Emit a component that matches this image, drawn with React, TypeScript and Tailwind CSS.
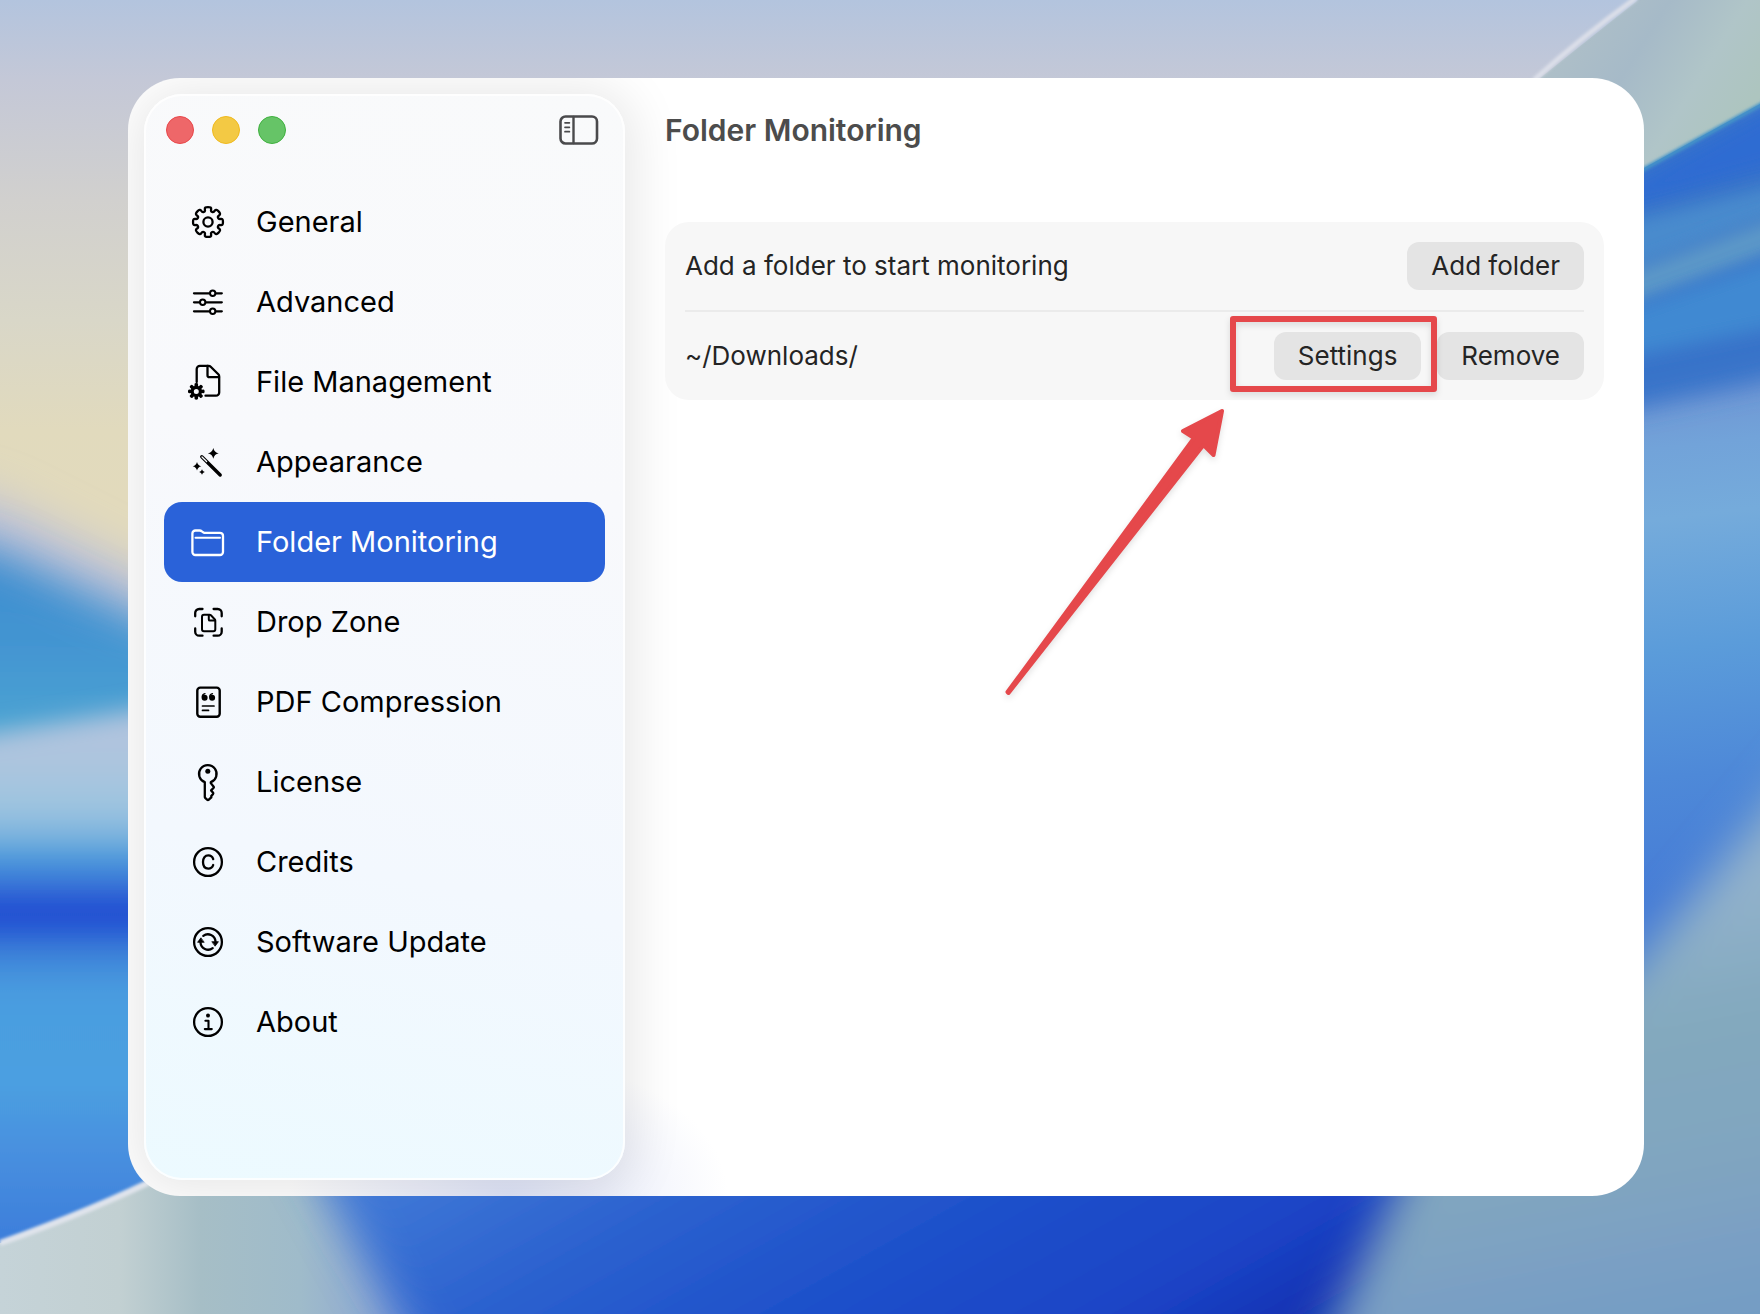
import React, { useState } from 'react';

type IconProps = { children: React.ReactNode };

// Shared 36x36 frame for every sidebar glyph
const Icon = ({ children }: IconProps) => (
  <svg
    viewBox="0 0 36 36"
    className="size-9 shrink-0 overflow-visible"
    fill="none"
    stroke="currentColor"
    strokeWidth={2.3}
    strokeLinecap="round"
    strokeLinejoin="round"
    aria-hidden="true"
  >
    {children}
  </svg>
);

// Rounded gear outline: corners are smoothed by curving through the midpoints
const gearPath = (cx: number, cy: number, outer: number, inner: number, tip: number, root: number) => {
  const pts: number[][] = [];
  for (let i = 0; i < 8; i++) {
    const a = (i * Math.PI) / 4;
    [[-root, inner], [-tip, outer], [tip, outer], [root, inner]].forEach(([d, r]) => {
      pts.push([cx + r * Math.cos(a + d), cy + r * Math.sin(a + d)]);
    });
  }
  const mid = (p: number[], q: number[]) => `${((p[0] + q[0]) / 2).toFixed(2)} ${((p[1] + q[1]) / 2).toFixed(2)}`;
  let d = `M${mid(pts[pts.length - 1], pts[0])}`;
  pts.forEach((p, i) => {
    d += `Q${p[0].toFixed(2)} ${p[1].toFixed(2)} ${mid(p, pts[(i + 1) % pts.length])}`;
  });
  return d + 'Z';
};

const star = (x: number, y: number, r: number) => {
  const k = r * 0.18;
  return `M${x} ${y - r}Q${x + k} ${y - k} ${x + r} ${y}Q${x + k} ${y + k} ${x} ${y + r}Q${x - k} ${y + k} ${x - r} ${y}Q${x - k} ${y - k} ${x} ${y - r}Z`;
};

const GeneralIcon = () => (
  <Icon>
    <path d={gearPath(18, 18, 15.4, 11, 0.24, 0.24)} />
    <circle cx="18" cy="18" r="4.6" />
  </Icon>
);

const AdvancedIcon = () => (
  <Icon>
    <path d="M4 9.3h15.6M25.8 9.3h6M4 18.3h5.6M15.8 18.3h16M4 27.3h15.6M25.8 27.3h6" />
    <circle cx="22.7" cy="9.3" r="2.7" strokeWidth={2} />
    <circle cx="12.7" cy="18.3" r="2.7" strokeWidth={2} />
    <circle cx="22.7" cy="27.3" r="2.7" strokeWidth={2} />
  </Icon>
);

const FileIcon = () => (
  <Icon>
    <path d="M6.7 18V5a3.2 3.2 0 0 1 3.2-3.2h8.7c.8 0 1.5.3 2.1.9l7.6 7.6c.6.6.9 1.3.9 2.1V28.5a3.2 3.2 0 0 1-3.2 3.2H15.5" />
    <path d="M17.5 2v9.2a2 2 0 0 0 2 2h9.5" />
    <path
      d={gearPath(6.3, 27.4, 8.6, 5.6, 0.24, 0.28) + 'M6.3 24.9a2.5 2.5 0 1 0 0 5a2.5 2.5 0 1 0 0-5Z'}
      fill="currentColor"
      fillRule="evenodd"
      stroke="none"
    />
  </Icon>
);

const AppearanceIcon = () => (
  <Icon>
    <path d="M11.8 12.8 30.2 31" strokeWidth={3.4} />
    <path d="M12 13 16.6 17.5" stroke="#f8fafc" strokeWidth={1.3} />
    <path d={star(23.3, 9.3, 5.4) + star(7, 22.2, 4.3) + star(12, 28, 2.8)} fill="currentColor" stroke="none" />
  </Icon>
);

const FolderIcon = () => (
  <Icon>
    <path d="M2.4 9.5a3 3 0 0 1 3-3h4.2c.9 0 1.6.3 2.3.9l1 .8c.5.4 1 .6 1.7.6h15.4a3 3 0 0 1 3 3V28a3 3 0 0 1-3 3H5.4a3 3 0 0 1-3-3Z" />
    <path d="M5.5 13.7H30" strokeWidth={2} />
  </Icon>
);

const DropZoneIcon = () => (
  <Icon>
    <path d="M5.2 12.3V9a4 4 0 0 1 4-4h3.3M23.6 5H27.7a4 4 0 0 1 4 4v3.3M31.7 24.5v3.2a4 4 0 0 1-4 4h-4.1M12.5 31.7H9.2a4 4 0 0 1-4-4v-3.2" />
    <path d="M14 10.7h5.5c.6 0 1 .2 1.4.6l3.8 3.9c.4.4.6.9.6 1.4v8.7a2 2 0 0 1-2 2H14a2 2 0 0 1-2-2V12.7a2 2 0 0 1 2-2Z" strokeWidth={2} />
    <path d="M18.8 11v4.4a1.2 1.2 0 0 0 1.2 1.2h5" strokeWidth={2} />
  </Icon>
);

const PdfIcon = () => (
  <Icon>
    <rect x="7.3" y="3.6" width="22.4" height="29.2" rx="3" strokeWidth={2.4} />
    <path d="M12.3 12.8c0-1.6 1-2.9 2.7-3.2M19.8 12.8c0-1.6 1-2.9 2.7-3.2" strokeWidth={1.3} />
    <circle cx="14.6" cy="13.7" r="3" fill="currentColor" stroke="none" />
    <circle cx="22.1" cy="13.7" r="3" fill="currentColor" stroke="none" />
    <path d="M12.5 22h11.5M12.5 26.4h6" strokeWidth={1.7} />
  </Icon>
);

const KeyIcon = () => (
  <Icon>
    <path d="M14.8 18.2a8.8 8.8 0 1 1 6 0v.9l2.9 3.7c.3.4.3.7 0 1l-2.6 2.6 2 2.4c.3.4.3.7 0 1.1l-1.8 2.2v1.3L18.8 35.7c-.5.5-1.2.5-1.7 0l-1.7-1.5c-.4-.4-.6-.8-.6-1.3Z" />
    <circle cx="17.8" cy="7.3" r="2.5" fill="currentColor" stroke="none" />
  </Icon>
);

const CreditsIcon = () => (
  <Icon>
    <circle cx="18" cy="18" r="13.9" />
    <path d="M23.2 15.1c-.7-2.3-2.5-3.7-4.9-3.7-3.3 0-5.3 2.5-5.3 6.6s2 6.6 5.3 6.6c2.4 0 4.2-1.3 4.9-3.6" />
  </Icon>
);

const UpdateIcon = () => (
  <Icon>
    <circle cx="18" cy="18" r="13.9" />
    <path d="M13.3 11.9A7.6 7.6 0 0 1 25.5 17.5M22.7 24.1A7.6 7.6 0 0 1 10.5 18.5" />
    <path d="M22.2 17.7h6.2l-3.1 4.2ZM13.8 18.3H7.6l3.1-4.2Z" fill="currentColor" strokeWidth={0.8} />
  </Icon>
);

const AboutIcon = () => (
  <Icon>
    <circle cx="18" cy="18" r="13.9" />
    <circle cx="18" cy="11.5" r="2" fill="currentColor" stroke="none" />
    <path d="M15.4 16.7h3.1v8.4M14.8 25.1h7" strokeWidth={2.1} />
  </Icon>
);

const navItems = [
  { id: 'general', label: 'General', icon: <GeneralIcon /> },
  { id: 'advanced', label: 'Advanced', icon: <AdvancedIcon /> },
  { id: 'files', label: 'File Management', icon: <FileIcon /> },
  { id: 'appearance', label: 'Appearance', icon: <AppearanceIcon /> },
  { id: 'folders', label: 'Folder Monitoring', icon: <FolderIcon /> },
  { id: 'dropzone', label: 'Drop Zone', icon: <DropZoneIcon /> },
  { id: 'pdf', label: 'PDF Compression', icon: <PdfIcon /> },
  { id: 'license', label: 'License', icon: <KeyIcon /> },
  { id: 'credits', label: 'Credits', icon: <CreditsIcon /> },
  { id: 'update', label: 'Software Update', icon: <UpdateIcon /> },
  { id: 'about', label: 'About', icon: <AboutIcon /> },
];

// Desktop wallpaper: soft bands of colour behind the window
const Wallpaper = () => (
  <svg
    viewBox="0 0 1760 1314"
    preserveAspectRatio="none"
    className="absolute inset-0 size-full"
    aria-hidden="true"
  >
    <defs>
      <linearGradient id="sky" x1="0" y1="0" x2="0" y2="500" gradientUnits="userSpaceOnUse">
        <stop offset="0" stopColor="#b3c4de" />
        <stop offset="0.16" stopColor="#c4c8d7" />
        <stop offset="0.4" stopColor="#d1d0ce" />
        <stop offset="0.64" stopColor="#d9d7c8" />
        <stop offset="0.86" stopColor="#e1dabd" />
        <stop offset="1" stopColor="#e2dabc" />
      </linearGradient>
      <linearGradient id="leftBands" x1="0" y1="715" x2="0" y2="1240" gradientUnits="userSpaceOnUse">
        <stop offset="0" stopColor="#b2c3de" />
        <stop offset="0.08" stopColor="#aec5de" />
        <stop offset="0.17" stopColor="#9fc5e0" />
        <stop offset="0.23" stopColor="#7db4de" />
        <stop offset="0.27" stopColor="#4b9bdb" />
        <stop offset="0.32" stopColor="#3a76d8" />
        <stop offset="0.37" stopColor="#1e49d1" />
        <stop offset="0.4" stopColor="#2455d3" />
        <stop offset="0.46" stopColor="#3f86d9" />
        <stop offset="0.53" stopColor="#4a9de0" />
        <stop offset="0.7" stopColor="#4ba0e1" />
        <stop offset="0.8" stopColor="#4a93e0" />
        <stop offset="1" stopColor="#3d7edb" />
      </linearGradient>
      <linearGradient id="leftBlue" x1="0" y1="560" x2="0" y2="735" gradientUnits="userSpaceOnUse">
        <stop offset="0" stopColor="#3f8ed0" />
        <stop offset="0.55" stopColor="#4496d2" />
        <stop offset="1" stopColor="#4ca5d2" />
      </linearGradient>
      <linearGradient id="shore" x1="0" y1="0" x2="400" y2="0" gradientUnits="userSpaceOnUse">
        <stop offset="0" stopColor="#c5d3d8" />
        <stop offset="0.3" stopColor="#c2d0d2" />
        <stop offset="0.5" stopColor="#a6bec6" />
        <stop offset="0.75" stopColor="#9fbbca" />
        <stop offset="1" stopColor="#8ba5d4" />
      </linearGradient>
      <linearGradient id="bottomBlue" x1="300" y1="1000" x2="800" y2="1900" gradientUnits="userSpaceOnUse">
        <stop offset="0.2" stopColor="#3f78d6" />
        <stop offset="0.34" stopColor="#2c62cf" />
        <stop offset="0.5" stopColor="#1e50ca" />
        <stop offset="0.66" stopColor="#1b43c6" />
        <stop offset="0.76" stopColor="#0f2dae" />
      </linearGradient>
      <linearGradient id="rightBands" x1="1640" y1="400" x2="1700" y2="900" gradientUnits="userSpaceOnUse">
        <stop offset="0" stopColor="#6f97d4" />
        <stop offset="0.1" stopColor="#72a3d9" />
        <stop offset="0.24" stopColor="#75abdb" />
        <stop offset="0.5" stopColor="#5b9cda" />
        <stop offset="0.75" stopColor="#4e89d8" />
        <stop offset="1" stopColor="#467cd6" />
      </linearGradient>
      <linearGradient id="rightTeal" x1="1640" y1="900" x2="1720" y2="1314" gradientUnits="userSpaceOnUse">
        <stop offset="0" stopColor="#92b2cc" />
        <stop offset="0.3" stopColor="#83a9be" />
        <stop offset="0.65" stopColor="#80a5c0" />
        <stop offset="0.85" stopColor="#7a9fc4" />
        <stop offset="1" stopColor="#739dc4" />
      </linearGradient>
      <linearGradient id="topTeal" x1="1580" y1="20" x2="1740" y2="120" gradientUnits="userSpaceOnUse">
        <stop offset="0" stopColor="#aebfc8" />
        <stop offset="0.35" stopColor="#a6bac8" />
        <stop offset="0.7" stopColor="#b0c5c8" />
        <stop offset="1" stopColor="#adc5bf" />
      </linearGradient>
      <filter id="blur1" x="-20%" y="-20%" width="140%" height="140%"><feGaussianBlur stdDeviation="1.5" /></filter>
      <filter id="blur5" x="-20%" y="-30%" width="140%" height="160%"><feGaussianBlur stdDeviation="9" /></filter>
      <filter id="blur10" x="-30%" y="-30%" width="160%" height="160%"><feGaussianBlur stdDeviation="12" /></filter>
      <filter id="blur20" x="-30%" y="-30%" width="160%" height="160%"><feGaussianBlur stdDeviation="22" /></filter>
    </defs>

    <rect width="1760" height="1314" fill="url(#sky)" />

    {/* left edge */}
    <path d="M-100 470 0 500 160 580V900H-100Z" fill="#bfc2d8" filter="url(#blur20)" />
    <path d="M-100 518 0 550 180 636V900H-100Z" fill="url(#leftBlue)" filter="url(#blur20)" />
    <path d="M-60 742 200 700V1400H-60Z" fill="url(#leftBands)" filter="url(#blur10)" />

    {/* bottom edge */}
    <path d="M0 1243C60 1222 110 1202 170 1172H480V1314H0Z" fill="url(#shore)" />
    <path d="M0 1243C60 1222 110 1202 170 1172" fill="none" stroke="#e0e4ec" strokeWidth="6" filter="url(#blur1)" />
    <path d="M278 1100 443 1400H1700V1100Z" fill="url(#bottomBlue)" filter="url(#blur20)" />

    {/* right edge */}
    <rect x="1600" y="120" width="160" height="1194" fill="url(#rightBands)" />
    <path d="M1438 1100 1620 985 1840 720V1400H1296Z" fill="url(#rightTeal)" filter="url(#blur20)" />
    <path d="M1560 190 1900 20V345L1760 382 1560 424Z" fill="#3773c9" filter="url(#blur10)" />
    <path d="M1600 200 1800 90V160L1600 215Z" fill="#2f6cd2" filter="url(#blur5)" />
    <path d="M1600 228 1800 180V205L1600 280Z" fill="#4a8bcd" filter="url(#blur5)" />
    <path d="M1600 282 1800 208V242L1600 316Z" fill="#5d99c8" filter="url(#blur5)" />
    <path d="M1600 320 1800 250V322L1600 362Z" fill="#4089d2" filter="url(#blur5)" />
    <path d="M1540 78 1638 0H1760V104L1644 168 1600 190Z" fill="url(#topTeal)" />
    <path d="M1600 190 1644 169 1760 105 1800 82" fill="none" stroke="#4594c8" strokeWidth="4" filter="url(#blur1)" />
    <path d="M1534 80C1565 52 1600 24 1636 -2" fill="none" stroke="#dcdfe9" strokeWidth="5" filter="url(#blur1)" />
  </svg>
);

const SidebarToggleIcon = () => (
  <svg viewBox="0 0 40 30" className="h-[30px] w-10" fill="none" stroke="currentColor" strokeLinecap="round" aria-hidden="true">
    <rect x="1.5" y="1.5" width="36.5" height="27" rx="5" strokeWidth={2.6} />
    <path d="M14.5 2v26" strokeWidth={2.4} />
    <path d="M6 7.8h4.4M6 12.3h4.4M6 16.7h4.4" strokeWidth={1.7} />
  </svg>
);

const pillButton = 'h-12 rounded-xl bg-[#e4e4e4] px-6 text-[26px] leading-8 text-[#242424]';

export default function App() {
  const [active, setActive] = useState('folders');
  const title = navItems.find((item) => item.id === active)?.label;

  return (
    <div className="relative flex min-h-screen overflow-hidden pt-[78px] pr-[116px] pb-[118px] pl-32 font-['Inter','Liberation_Sans',sans-serif]">
      <Wallpaper />

      <div className="relative flex flex-1 overflow-hidden rounded-[52px] bg-white bg-[radial-gradient(220px_140px_at_380px_100%,#dfe4f8,#dfe4f800)]">
        <aside className="my-4 ml-4 w-[481px] shrink-0 rounded-[38px] bg-[linear-gradient(12deg,#ecfaff,#f3f8fe_30%,#f8f9fc_65%,#f9fafb)] shadow-[inset_0_0_0_2px_#ffffffcc,0_4px_50px_10px_#00000018]">
          <div className="flex h-[72px] items-center justify-between pr-[26px] pl-[22px]">
            <div className="flex gap-[18px]">
              <button aria-label="Close" className="size-7 rounded-full border border-[#e8474a] bg-[#ee6769]" />
              <button aria-label="Minimize" className="size-7 rounded-full border border-[#efb91e] bg-[#f3c944]" />
              <button aria-label="Zoom" className="size-7 rounded-full border border-[#3fb13f] bg-[#66c467]" />
            </div>
            <button aria-label="Toggle sidebar" className="text-[#4a4a4c]">
              <SidebarToggleIcon />
            </button>
          </div>

          <nav className="flex flex-col px-5 pt-4">
            {navItems.map((item) => (
              <button
                key={item.id}
                onClick={() => setActive(item.id)}
                className={`flex h-20 items-center gap-[30px] rounded-[18px] px-[26px] text-[29px] leading-9 ${
                  item.id === active ? 'bg-[#2a62d9] text-white' : 'text-black'
                }`}
              >
                {item.icon}
                <span>{item.label}</span>
              </button>
            ))}
          </nav>
        </aside>

        <main className="min-w-0 flex-1 pt-4 pr-10 pl-10">
          <header className="flex h-[72px] items-center">
            <h1 className="text-[30px] leading-9 font-semibold text-[#4c4c4c]">{title}</h1>
          </header>

          <section className="mt-14 divide-y-2 divide-[#ebebeb] rounded-3xl bg-[#f7f7f7] px-5 text-[26px] leading-8 text-[#242424]">
            {/* the divider sits inside the first row's box */}
            <div className="flex h-[90px] items-center justify-between">
              <span>Add a folder to start monitoring</span>
              <button className={pillButton}>Add folder</button>
            </div>
            <div className="flex h-[88px] items-center justify-between">
              <span>~/Downloads/</span>
              <div className="flex gap-4">
                <div className="relative">
                  <button className={pillButton}>Settings</button>
                  {/* callout drawn over the Settings button */}
                  <div className="pointer-events-none absolute -top-4 -right-4 -bottom-3 -left-11 rounded-[3px] border-6 border-[#e5484b] drop-shadow-md" />
                  <svg
                    viewBox="0 0 250 310"
                    className="pointer-events-none absolute top-[63px] right-[181px] h-[310px] w-[250px] drop-shadow-md"
                    fill="#e5484b"
                    stroke="#e5484b"
                    strokeWidth={4}
                    strokeLinejoin="round"
                    aria-hidden="true"
                  >
                    <path d="M232 16 193 36 204 43 17.5 297 18.5 298 213.5 50 223.5 60Z" />
                  </svg>
                </div>
                <button className={pillButton}>Remove</button>
              </div>
            </div>
          </section>
        </main>
      </div>
    </div>
  );
}
